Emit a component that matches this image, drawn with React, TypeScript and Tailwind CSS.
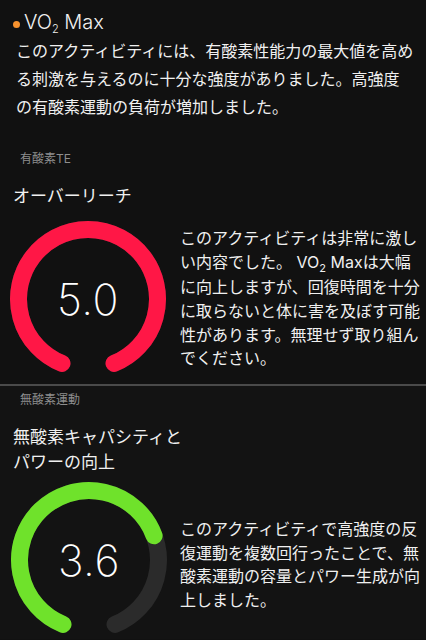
import React from 'react';

const START = { x: 52.97, y: 143.44 };
const END = { x: 105.03, y: 143.44 };

// angle clockwise from top, in degrees
const point = (deg: number) => {
  const r = 69.5;
  const rad = (deg * Math.PI) / 180;
  return { x: 79 + r * Math.sin(rad), y: 79 - r * Math.cos(rad) };
};

const Gauge: React.FC<{ value: number; color: string }> = ({ value, color }) => {
  const frac = Math.min(value / 5, 1);
  const sweep = 316 * frac;
  const end = point(202 + sweep);
  const track = `M ${START.x} ${START.y} A 69.5 69.5 0 1 1 ${END.x} ${END.y}`;
  const bar = `M ${START.x} ${START.y} A 69.5 69.5 0 ${sweep > 180 ? 1 : 0} 1 ${end.x.toFixed(2)} ${end.y.toFixed(2)}`;
  return (
    <div className="relative w-[158px] h-[158px] shrink-0">
      <svg width="158" height="158" viewBox="0 0 158 158">
        <path d={track} fill="none" stroke="#2b2b2b" strokeWidth={17} strokeLinecap="round" />
        <path d={bar} fill="none" stroke={color} strokeWidth={17} strokeLinecap="round" />
      </svg>
      <div className="absolute inset-0 flex items-center justify-center text-[43px] font-extralight text-white tracking-[0.5px] font-['Inter',sans-serif]">
        {value.toFixed(1)}
      </div>
    </div>
  );
};

const Sub = () => <span className="text-[11px] relative top-[4px]">2</span>;

const App: React.FC = () => {
  return (
    <div className="w-[426px] h-[640px] overflow-hidden bg-[#111111] text-[#f0f0f0] font-['Inter','Noto_Sans_CJK_JP',sans-serif]">
      <div className="flex items-center pl-[13px] pt-[9px] h-[37px] leading-[28px]">
        <span className="w-[7px] h-[7px] rounded-full bg-[#f7922e] mr-[4px] mt-[3px]" />
        <span className="text-[20px] font-light">
          VO<Sub /> Max
        </span>
      </div>
      <p className="px-4 text-[16px] leading-[28px] whitespace-nowrap">
        このアクティビティには、有酸素性能力の最大値を高め<br />
        る刺激を与えるのに十分な強度がありました。高強度<br />
        の有酸素運動の負荷が増加しました。
      </p>

      <div className="pl-5 mt-[30px] text-[12px] leading-[16px] text-[#8e8e8e]">有酸素TE</div>
      <div className="pl-[13px] mt-[17px] text-[17px] leading-[24px]">オーバーリーチ</div>
      <div className="flex items-center mt-[12px] pl-[9px] gap-[13px]">
        <Gauge value={5.0} color="#ff1746" />
        <p className="text-[16px] leading-[23.6px] whitespace-nowrap">
          このアクティビティは非常に激し<br />
          い内容でした。 VO<Sub /> Maxは大幅<br />
          に向上しますが、回復時間を十分<br />
          に取らないと体に害を及ぼす可能<br />
          性があります。無理せず取り組ん<br />
          でください。
        </p>
      </div>

      <div className="mt-[6px] h-[2px] bg-[#4a4a4a]" />

      <div className="bg-[#131313]">
        <div className="pl-5 pt-[6px] text-[12px] leading-[16px] text-[#8e8e8e]">無酸素運動</div>
        <div className="pl-[13px] mt-[17px] text-[17px] leading-[25px]">
          無酸素キャパシティと<br />
          パワーの向上
        </div>
        <div className="flex items-center mt-[6px] pl-[10px] gap-[12px]">
          <Gauge value={3.6} color="#6fe22b" />
          <p className="pt-[10px] text-[16px] leading-[23.5px] whitespace-nowrap">
            このアクティビティで高強度の反<br />
            復運動を複数回行ったことで、無<br />
            酸素運動の容量とパワー生成が向<br />
            上しました。
          </p>
        </div>
      </div>
    </div>
  );
};

export default App;
